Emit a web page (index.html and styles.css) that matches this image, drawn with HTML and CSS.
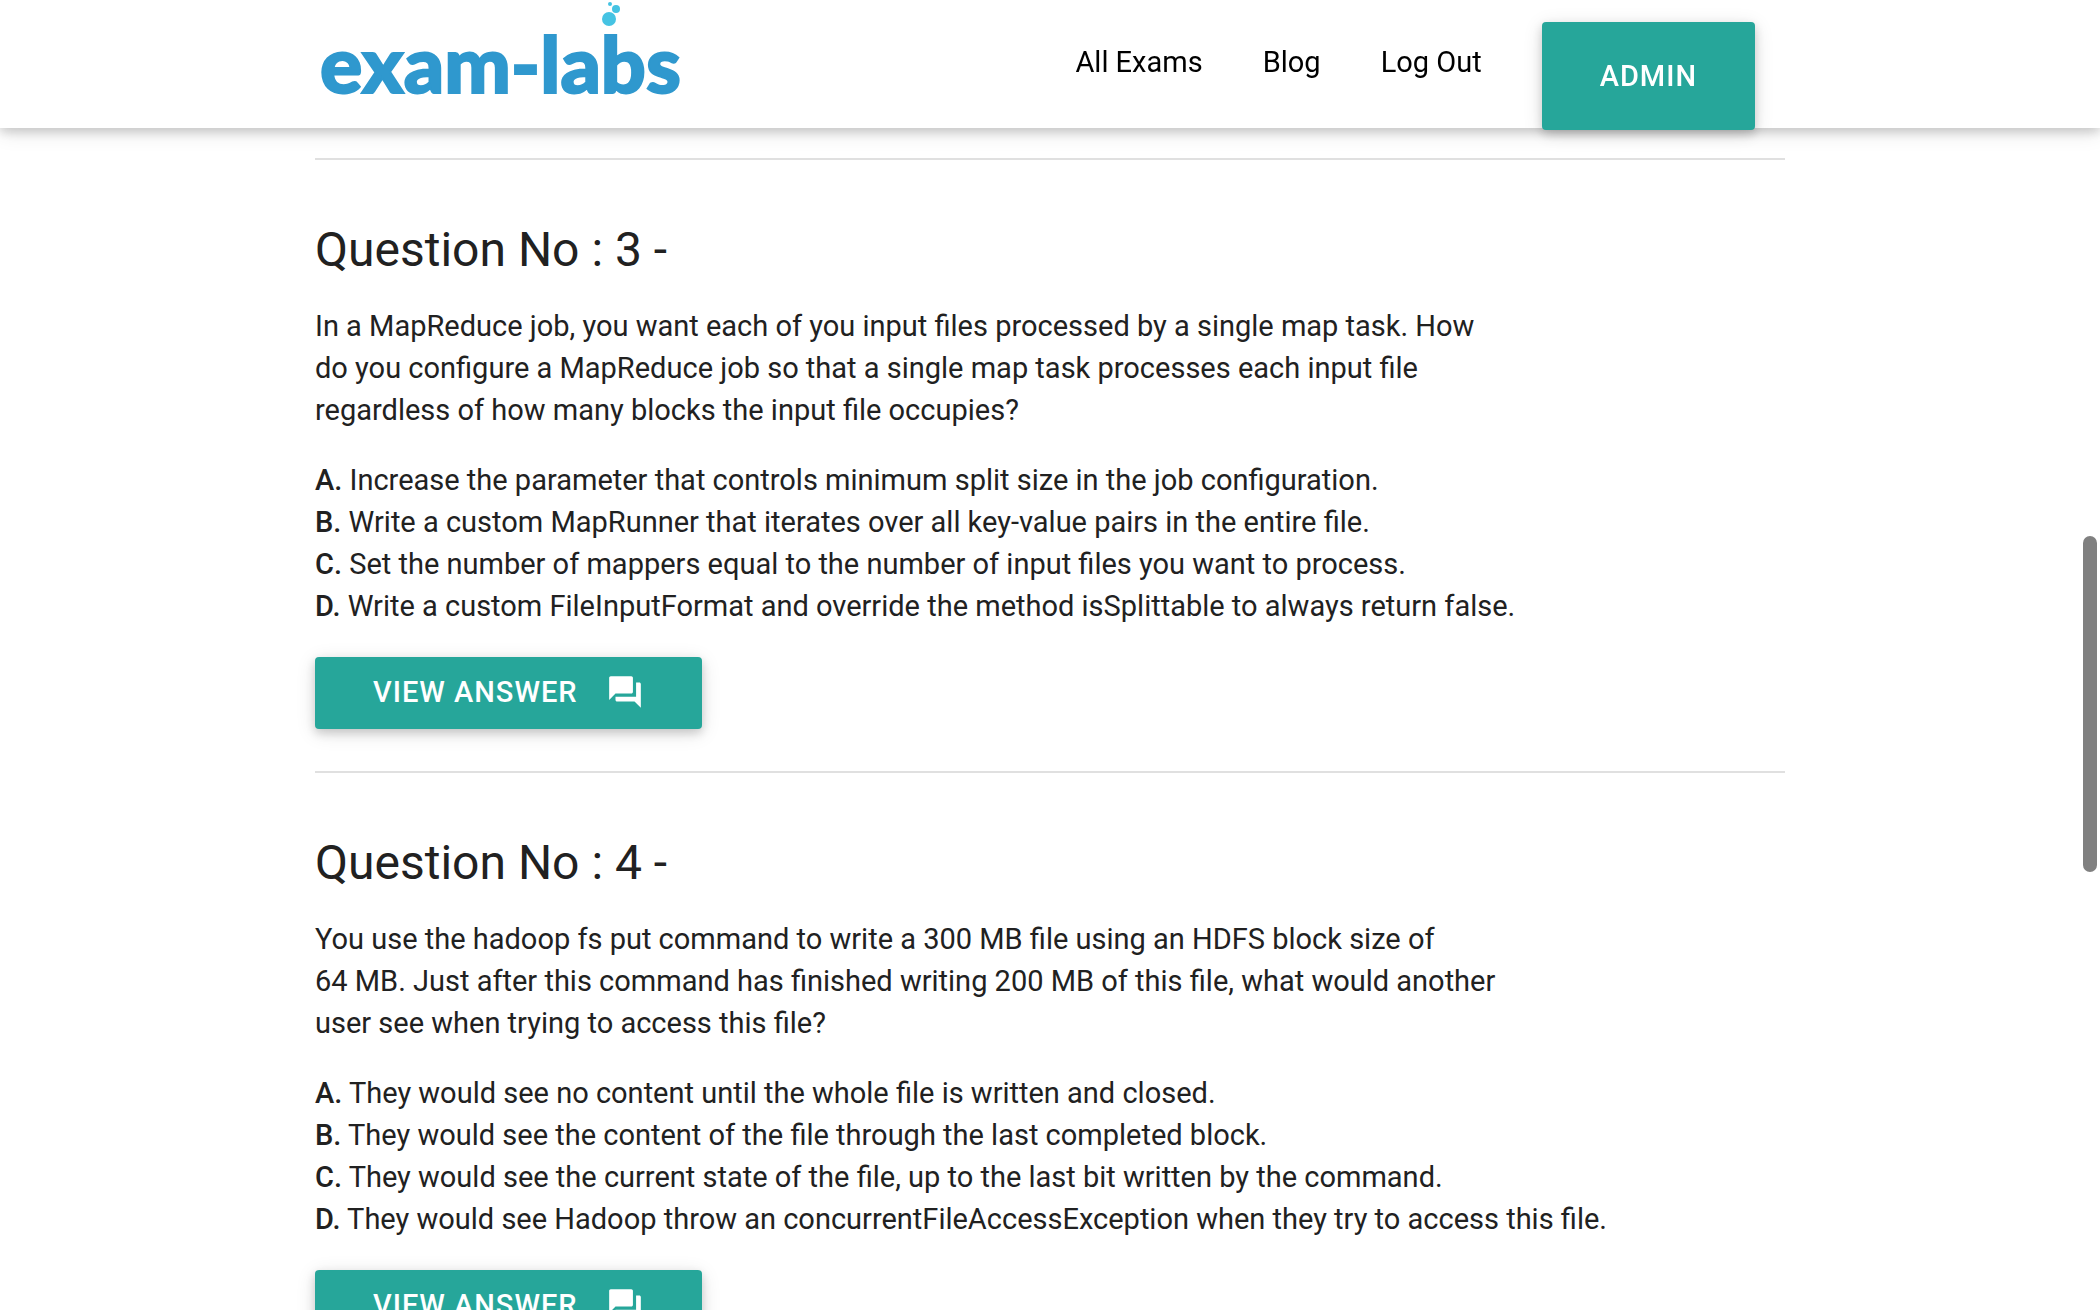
FILE: index.html
```html
<!DOCTYPE html>
<html lang="en">
<head>
    <meta charset="UTF-8">
    <meta name="viewport" content="width=device-width, initial-scale=1.0">
    <title>Exam-Labs</title>
    <link rel="stylesheet" href="styles.css">
</head>
<body>
    <header class="navbar">
        <div class="container nav-wrapper">
            <a href="#" class="brand-logo" aria-label="exam-labs">
                <svg width="370" height="128" viewBox="0 0 370 128">
                    <text x="5" y="93">exam-labs</text>
                    <g class="bubbles">
                        <circle cx="294" cy="19" r="7"/>
                        <circle cx="301" cy="9" r="4"/>
                        <circle cx="295" cy="4" r="2"/>
                    </g>
                </svg>
            </a>
            <nav>
                <a href="#">All Exams</a>
                <a href="#">Blog</a>
                <a href="#">Log Out</a>
                <a href="#" class="btn btn-admin">Admin</a>
            </nav>
        </div>
    </header>

    <main class="container">
        <section class="question">
            <h5>Question No : 3 -</h5>
            <p>
                In a MapReduce job, you want each of you input files processed by a single map task. How<br>
                do you configure a MapReduce job so that a single map task processes each input file<br>
                regardless of how many blocks the input file occupies?
            </p>
            <p>
                <b>A.</b> Increase the parameter that controls minimum split size in the job configuration.<br>
                <b>B.</b> Write a custom MapRunner that iterates over all key-value pairs in the entire file.<br>
                <b>C.</b> Set the number of mappers equal to the number of input files you want to process.<br>
                <b>D.</b> Write a custom FileInputFormat and override the method isSplittable to always return false.
            </p>
            <button type="button" class="btn btn-answer">
                View Answer
                <svg class="icon" viewBox="0 0 24 24"><path d="M21 6h-2v9H6v2c0 .55.45 1 1 1h11l4 4V7c0-.55-.45-1-1-1zm-4 6V3c0-.55-.45-1-1-1H3c-.55 0-1 .45-1 1v14l4-4h10c.55 0 1-.45 1-1z"/></svg>
            </button>
        </section>

        <section class="question">
            <h5>Question No : 4 -</h5>
            <p>
                You use the hadoop fs put command to write a 300 MB file using an HDFS block size of<br>
                64 MB. Just after this command has finished writing 200 MB of this file, what would another<br>
                user see when trying to access this file?
            </p>
            <p>
                <b>A.</b> They would see no content until the whole file is written and closed.<br>
                <b>B.</b> They would see the content of the file through the last completed block.<br>
                <b>C.</b> They would see the current state of the file, up to the last bit written by the command.<br>
                <b>D.</b> They would see Hadoop throw an concurrentFileAccessException when they try to access this file.
            </p>
            <button type="button" class="btn btn-answer">
                View Answer
                <svg class="icon" viewBox="0 0 24 24"><path d="M21 6h-2v9H6v2c0 .55.45 1 1 1h11l4 4V7c0-.55-.45-1-1-1zm-4 6V3c0-.55-.45-1-1-1H3c-.55 0-1 .45-1 1v14l4-4h10c.55 0 1-.45 1-1z"/></svg>
            </button>
        </section>
    </main>

    <div class="scroll-thumb"></div>
</body>
</html>
```

FILE: styles.css
```css
:root {
    --teal: #26a69a;
    --blue: #2f98ce;
    --bubble: #45c3e3;
    --text: #212121;
    --line: #e0e0e0;
}

* {
    box-sizing: border-box;
}

html {
    scrollbar-width: none;
}

body {
    margin: 0;
    background: #fff;
    color: var(--text);
    font-family: Roboto, sans-serif;
    font-size: 29px;
    line-height: 42px;
}

.container {
    width: 70%;
    margin: 0 auto;
}

/* Header */
.navbar {
    position: fixed;
    top: 0;
    left: 0;
    width: 100%;
    height: 128px;
    background: #fff;
    box-shadow: 0 4px 10px rgba(0,0,0,0.16), 0 4px 20px rgba(0,0,0,0.12);
    z-index: 10;
}

.nav-wrapper {
    display: flex;
    justify-content: space-between;
}

.brand-logo svg {
    display: block;
}

.brand-logo text {
    font-family: Lato, sans-serif;
    font-size: 79px;
    font-weight: 900;
    fill: var(--blue);
    stroke: var(--blue);
    stroke-width: 2px;
}

.bubbles {
    fill: var(--bubble);
}

nav {
    display: flex;
    line-height: 124px;
}

nav a {
    padding: 0 30px;
    color: #000;
    text-decoration: none;
}

/* Buttons */
.btn {
    border: none;
    border-radius: 4px;
    background: var(--teal);
    color: #fff;
    font-family: inherit;
    font-size: 29px;
    font-weight: 500;
    letter-spacing: 1px;
    text-transform: uppercase;
    box-shadow: 0 4px 10px rgba(0,0,0,0.16), 0 4px 20px rgba(0,0,0,0.12);
    cursor: pointer;
}

.btn-admin {
    height: 108px;
    margin: 22px 30px 0;
    padding: 0 58px;
    color: #fff;
    line-height: 108px;
}

.btn-answer {
    display: flex;
    height: 72px;
    margin-top: 30px;
    padding: 0 58px;
    line-height: 70px;
}

.icon {
    width: 38px;
    height: 38px;
    margin: 16px 0 0 28px;
    fill: #fff;
}

/* Questions */
main {
    padding-top: 158px;
}

.question {
    border-top: 2px solid var(--line);
    padding: 59px 0 42px;
}

h5 {
    margin: 0 0 24px;
    font-size: 48px;
    font-weight: 400;
    line-height: 62px;
}

p {
    margin: 0 0 28px;
}

b {
    font-weight: 500;
}

/* Page scroll indicator */
.scroll-thumb {
    position: fixed;
    top: 536px;
    right: 3px;
    width: 14px;
    height: 336px;
    border-radius: 7px;
    background: #808080;
}
```
